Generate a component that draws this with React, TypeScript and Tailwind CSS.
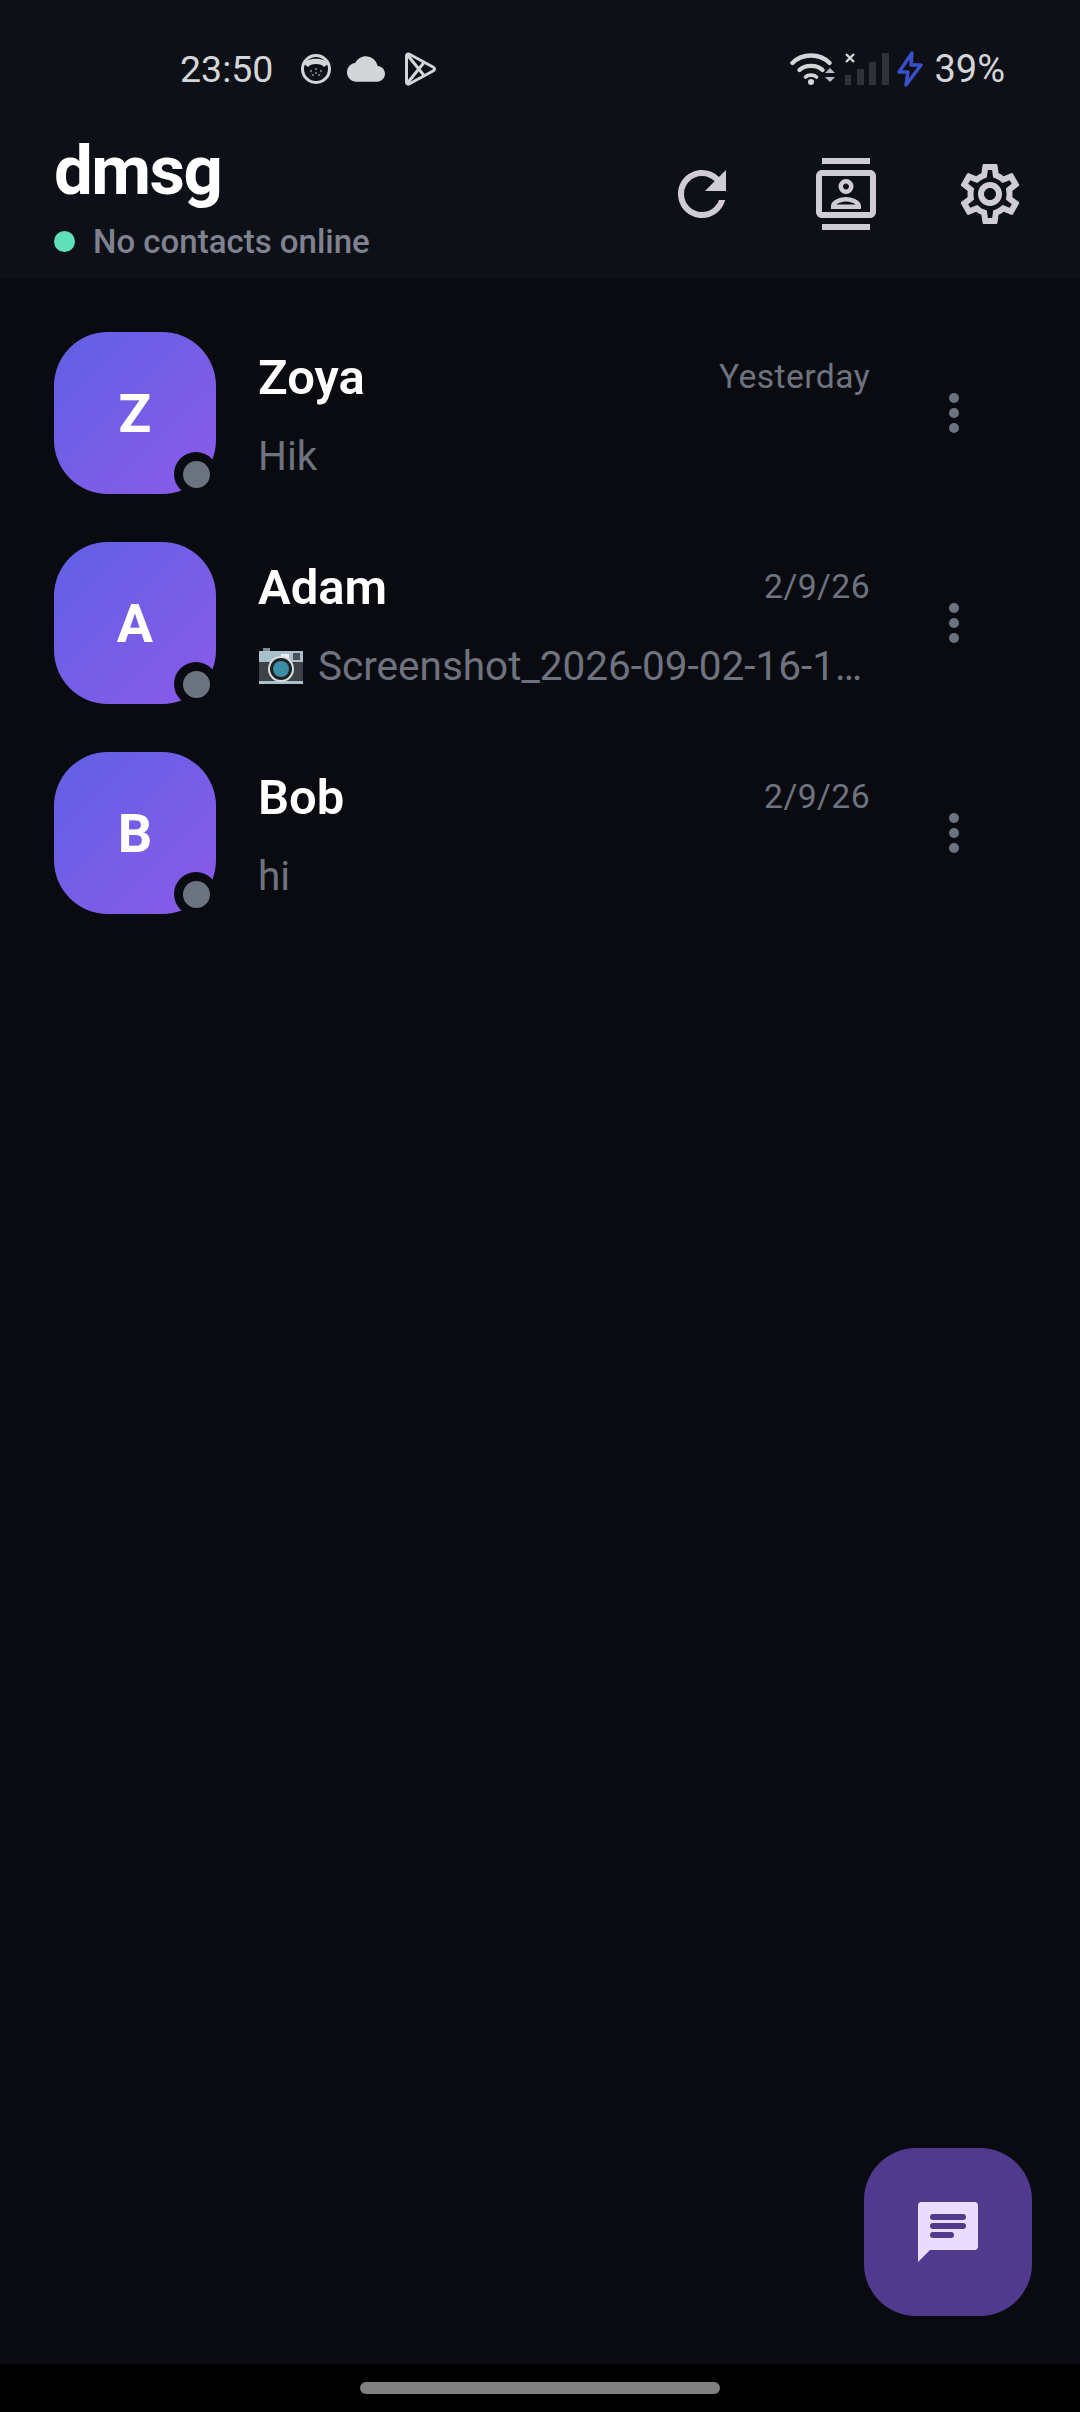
import { MdCloud, MdOutlineContacts, MdOutlineSettings, MdRefresh } from "react-icons/md";

const chats = [
  { name: "Zoya", time: "Yesterday", preview: "Hik", camera: false },
  { name: "Adam", time: "2/9/26", preview: "Screenshot_2026-09-02-16-1…", camera: true },
  { name: "Bob", time: "2/9/26", preview: "hi", camera: false },
];

function CatIcon() {
  return (
    <svg width="30" height="30" viewBox="0 0 30 30">
      <circle cx="15" cy="15" r="13.5" fill="#0d1017" stroke="#d4d5d8" strokeWidth="3" />
      <path d="M3 10 C6 3 24 3 27 10 L23 13 C21 9 9 9 7 13 Z" fill="#d4d5d8" />
      <g fill="#8f9196">
        <circle cx="10" cy="17" r="1" />
        <circle cx="15" cy="15" r="1" />
        <circle cx="20" cy="17" r="1" />
        <circle cx="12" cy="21" r="1" />
        <circle cx="18" cy="21" r="1" />
        <circle cx="15" cy="19" r="1" />
      </g>
    </svg>
  );
}

function PlayIcon() {
  return (
    <svg width="32" height="34" viewBox="0 0 32 34" fill="none" stroke="#d4d5d8" strokeWidth="3" strokeLinejoin="round">
      <path d="M2.5 4 C2.5 2 4 1.5 5.5 2.3 L29 15 C31 16 31 18 29 19 L5.5 31.7 C4 32.5 2.5 32 2.5 30 Z" />
      <path d="M3.5 3 L20 23.5 M3.5 31 L20 10.5" />
    </svg>
  );
}

function WifiIcon() {
  return (
    <svg width="46" height="34" viewBox="0 0 46 34" fill="none" stroke="#d4d5d8" strokeWidth="4.4" strokeLinecap="round">
      <path d="M2.5 11 C12 1 30 1 39.5 11" />
      <path d="M9.5 18 C15 12.5 27 12.5 32.5 18" />
      <path d="M15.5 25 C18 22.5 24 22.5 26.5 25" strokeWidth="3.6" />
      <circle cx="21" cy="30" r="3" fill="#d4d5d8" stroke="none" />
      <path d="M35 21 L40 16 L45 21 Z M35 25 L45 25 L40 30 Z" fill="#b9babe" stroke="none" />
    </svg>
  );
}

function SignalIcon() {
  return (
    <svg width="44" height="32" viewBox="0 0 44 32">
      <g fill="#2f3238">
        <rect x="0" y="22" width="6" height="10" />
        <rect x="12" y="16" width="7" height="16" />
        <rect x="24" y="9" width="7" height="23" />
        <rect x="37" y="0" width="7" height="32" />
      </g>
      <path d="M1 1 L9 9 M9 1 L1 9" stroke="#d4d5d8" strokeWidth="2.4" />
    </svg>
  );
}

function BoltIcon() {
  return (
    <svg width="26" height="36" viewBox="0 0 26 36" fill="none" stroke="#3a50c8" strokeWidth="3.4" strokeLinejoin="round">
      <path d="M15 2 L2 21 H11 L9 34 L24 14 H14 Z" />
    </svg>
  );
}

function CameraIcon() {
  return (
    <svg width="44" height="36" viewBox="0 0 44 36" className="shrink-0">
      <rect x="4" y="0" width="7" height="4" fill="#7d8a92" />
      <rect x="0" y="3" width="44" height="33" rx="1" fill="#3e4246" />
      <rect x="0" y="3" width="44" height="11" fill="#a9c0cb" />
      <rect x="22" y="6" width="8" height="5" fill="#e8eef1" />
      <rect x="34" y="5" width="7" height="7" fill="#4a5258" />
      <rect x="0" y="33" width="44" height="3" fill="#a9c0cb" />
      <circle cx="22" cy="21" r="13" fill="#d9dee0" />
      <circle cx="22" cy="21" r="11" fill="#1d2225" />
      <circle cx="22" cy="21" r="8" fill="#3b8ea6" />
    </svg>
  );
}

function ComposeIcon() {
  return (
    <svg width="60" height="60" viewBox="0 0 60 60">
      <path d="M3 0 H57 C58.5 0 60 1.5 60 3 V45 C60 46.5 58.5 48 57 48 H12 L0 60 V3 C0 1.5 1.5 0 3 0 Z" fill="#eadcff" />
      <rect x="12" y="12" width="36" height="6" rx="3" fill="#4f3a8e" />
      <rect x="12" y="21" width="36" height="6" rx="3" fill="#4f3a8e" />
      <rect x="12" y="30" width="24" height="6" rx="3" fill="#4f3a8e" />
    </svg>
  );
}

export default function App() {
  return (
    <div className="relative flex h-[2412px] w-[1080px] flex-col overflow-hidden bg-[#0a0b10] [font-family:Roboto,sans-serif]">
      <header className="h-[278px] bg-[#0d1017]">
        <div className="flex h-[116px] items-center justify-between pt-[22px] pl-[180px] pr-[75px]">
          <div className="flex items-center">
            <span className="text-[37.5px] leading-[44px] text-[#d4d5d8]">23:50</span>
            <div className="ml-[28px] flex items-center">
              <CatIcon />
              <MdCloud className="ml-[16px] h-[38px] w-[38px] text-[#d4d5d8]" />
              <div className="ml-[19px]">
                <PlayIcon />
              </div>
            </div>
          </div>
          <div className="flex items-center">
            <WifiIcon />
            <div className="ml-[9px]">
              <SignalIcon />
            </div>
            <div className="ml-[8px]">
              <BoltIcon />
            </div>
            <span className="ml-[11px] text-[38px] leading-[44px] text-[#d4d5d8]">39%</span>
          </div>
        </div>
        <div className="flex items-start justify-between pl-[54px] pr-[18px]">
          <div className="pt-[16px]">
            <h1 className="text-[69px] leading-[77px] font-bold tracking-[-1.5px] text-white">dmsg</h1>
            <div className="mt-[13px] flex items-center">
              <span className="h-[21px] w-[21px] rounded-full bg-[#5fe0b7]" />
              <span className="ml-[18px] text-[33px] leading-[39px] font-medium text-[#80828f]">No contacts online</span>
            </div>
          </div>
          <div className="flex pt-[6px] text-[#cfccd6]">
            <button className="flex h-[144px] w-[144px] items-center justify-center">
              <MdRefresh size={72} />
            </button>
            <button className="flex h-[144px] w-[144px] items-center justify-center">
              <MdOutlineContacts size={72} />
            </button>
            <button className="flex h-[144px] w-[144px] items-center justify-center">
              <MdOutlineSettings size={72} />
            </button>
          </div>
        </div>
      </header>

      <main className="flex-1 pt-[30px]">
        {chats.map((c) => (
          <div key={c.name} className="flex h-[210px] items-center pl-[54px]">
            <div className="relative h-[162px] w-[162px] shrink-0">
              <div className="flex h-full w-full items-center justify-center rounded-[54px] bg-gradient-to-br from-[#6060e6] to-[#8a5ae8] text-[54px] font-bold text-white">
                {c.name[0]}
              </div>
              <span className="absolute -right-[2px] -bottom-[2px] flex h-[44px] w-[44px] items-center justify-center rounded-full bg-[#0a0b10]">
                <span className="h-[27px] w-[27px] rounded-full bg-[#6b7280]" />
              </span>
            </div>
            <div className="ml-[42px] w-[612px] pt-[5px]">
              <div className="flex items-center justify-between">
                <span className="text-[49px] leading-[54px] font-semibold text-white">{c.name}</span>
                <span className="pb-[2px] text-[33.7px] leading-[40px] tracking-[0.4px] text-[#6f7380]">{c.time}</span>
              </div>
              <div className="mt-[27px] flex items-center text-[40.5px] leading-[48px] text-[#6f7380]">
                {c.camera && (
                  <span className="mr-[15px] ml-[1px] flex">
                    <CameraIcon />
                  </span>
                )}
                <span className="whitespace-nowrap">{c.preview}</span>
              </div>
            </div>
            <div className="ml-[79px] flex flex-col gap-[5px]">
              <span className="h-[10px] w-[10px] rounded-full bg-[#6b7280]" />
              <span className="h-[10px] w-[10px] rounded-full bg-[#6b7280]" />
              <span className="h-[10px] w-[10px] rounded-full bg-[#6b7280]" />
            </div>
          </div>
        ))}
      </main>

      <button className="absolute top-[2148px] left-[864px] flex h-[168px] w-[168px] items-center justify-center rounded-[52px] bg-[#4f3a8e]">
        <ComposeIcon />
      </button>

      <footer className="flex h-[48px] items-center justify-center bg-black">
        <span className="h-[12px] w-[360px] rounded-full bg-[#808080]" />
      </footer>
    </div>
  );
}
